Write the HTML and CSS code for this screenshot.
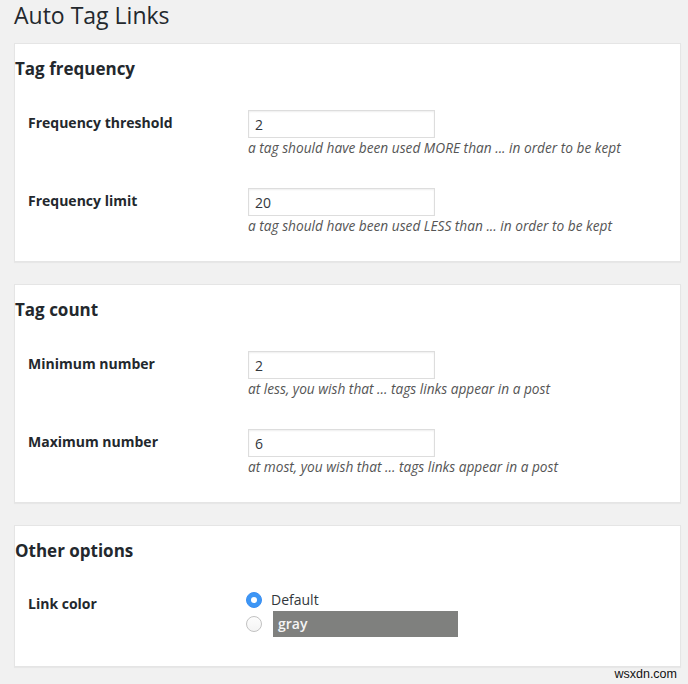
FILE: index.html
```html
<!DOCTYPE html>
<html lang="en">
<head>
<meta charset="utf-8">
<title>Auto Tag Links</title>
<link rel="stylesheet" href="styles.css">
</head>
<body>
<div class="wrap">
  <h1 class="page-title">Auto Tag Links</h1>

  <section class="card">
    <h2 class="card-title">Tag frequency</h2>
    <div class="fields">
      <div class="field">
        <label class="field-label" for="f1">Frequency threshold</label>
        <div class="field-control">
          <input class="text-input" id="f1" type="text" value="2">
          <p class="description">a tag should have been used MORE than ... in order to be kept</p>
        </div>
      </div>
      <div class="field">
        <label class="field-label" for="f2">Frequency limit</label>
        <div class="field-control">
          <input class="text-input" id="f2" type="text" value="20">
          <p class="description">a tag should have been used LESS than ... in order to be kept</p>
        </div>
      </div>
    </div>
  </section>

  <section class="card">
    <h2 class="card-title">Tag count</h2>
    <div class="fields">
      <div class="field">
        <label class="field-label" for="c1">Minimum number</label>
        <div class="field-control">
          <input class="text-input" id="c1" type="text" value="2">
          <p class="description">at less, you wish that ... tags links appear in a post</p>
        </div>
      </div>
      <div class="field">
        <label class="field-label" for="c2">Maximum number</label>
        <div class="field-control">
          <input class="text-input" id="c2" type="text" value="6">
          <p class="description">at most, you wish that ... tags links appear in a post</p>
        </div>
      </div>
    </div>
  </section>

  <section class="card card-last">
    <h2 class="card-title">Other options</h2>
    <div class="fields">
      <div class="field">
        <div class="field-label label-radio">Link color</div>
        <div class="field-control radios">
          <label class="radio-row row-default">
            <span class="radio checked"></span>
            <span class="radio-text">Default</span>
          </label>
          <label class="radio-row row-gray">
            <span class="radio"></span>
            <span class="swatch-gray">gray</span>
          </label>
        </div>
      </div>
    </div>
  </section>

  <div class="watermark">wsxdn.com</div>
</div>
</body>
</html>
```

FILE: styles.css
```css
html, body {
  margin: 0;
  padding: 0;
}

body {
  background: #f1f1f1;
  font-family: "Open Sans", "Liberation Sans", sans-serif;
  color: #23282d;
  font-size: 14px;
}

.wrap {
  padding: 0 7px 0 14px;
}

.page-title {
  margin: 0 0 12px;
  font-size: 23px;
  line-height: 31px;
  font-weight: 400;
  color: #23282d;
}

.card {
  background: #fff;
  border: 1px solid #e5e5e5;
  box-shadow: 0 1px 1px rgba(0, 0, 0, 0.04);
  padding: 13px 0 26px;
  margin-bottom: 22px;
}

.card-last {
  padding-bottom: 29px;
  margin-bottom: 0;
}

.card-title {
  margin: 0;
  font-size: 17px;
  line-height: 24px;
  font-weight: 700;
  color: #23282d;
}

.fields {
  margin-top: 29px;
  display: flex;
  flex-direction: column;
  gap: 31px;
}

.field {
  display: grid;
  grid-template-columns: 220px 1fr;
  padding-left: 13px;
}

.field-label {
  font-size: 14px;
  font-weight: 700;
  line-height: 26px;
  color: #23282d;
}

.label-radio {
  line-height: 24px;
}

.text-input {
  display: block;
  box-sizing: border-box;
  width: 187px;
  height: 28px;
  margin: 0;
  padding: 3px 6px;
  border: 1px solid #ddd;
  box-shadow: inset 0 1px 2px rgba(0, 0, 0, 0.07);
  background: #fff;
  font-family: "Open Sans", "Liberation Sans", sans-serif;
  font-size: 14px;
  line-height: 20px;
  color: #32373c;
  outline: none;
}

.description {
  margin: 1px 0 0;
  font-size: 13.7px;
  line-height: 18px;
  font-style: italic;
  color: #555;
}

.radios {
  display: flex;
  flex-direction: column;
  gap: 3px;
}

.radio-row {
  display: flex;
  align-items: center;
  margin-left: -2px;
}

.row-default {
  height: 16px;
}

.radio {
  box-sizing: border-box;
  width: 16px;
  height: 16px;
  border-radius: 50%;
  border: 1px solid #c2c2c2;
  background: linear-gradient(#fdfdfd, #f4f4f4);
  flex: none;
  position: relative;
}

.radio.checked {
  border-color: #3b8ff2;
  background: #3d96f5;
}

.radio.checked::after {
  content: "";
  position: absolute;
  left: 4px;
  top: 4px;
  width: 6px;
  height: 6px;
  border-radius: 50%;
  background: #fff;
}

.radio-text {
  margin-left: 9px;
  font-size: 14px;
  line-height: 16px;
  color: #32373c;
}

.swatch-gray {
  box-sizing: border-box;
  margin-left: 11px;
  width: 185px;
  height: 26px;
  padding: 0 5px;
  background: #7f807e;
  color: #f4f4f4;
  font-size: 14px;
  font-weight: 600;
  line-height: 26px;
}

.watermark {
  text-align: right;
  padding-right: 4px;
  font-family: "Liberation Sans", Arial, sans-serif;
  font-size: 12.5px;
  line-height: 15px;
  color: #111;
}
```
